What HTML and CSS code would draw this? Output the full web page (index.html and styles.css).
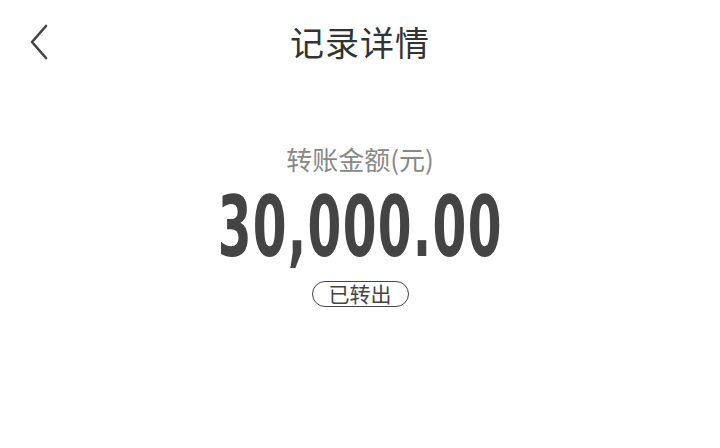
FILE: index.html
```html
<!DOCTYPE html>
<html lang="zh-CN">
<head>
    <meta charset="UTF-8">
    <meta name="viewport" content="width=device-width, initial-scale=1.0">
    <title>记录详情</title>
    <link rel="stylesheet" href="styles.css">
</head>
<body>
    <div class="page">
        <header class="nav-bar">
            <button type="button" class="back-btn" aria-label="返回">
                <svg width="22" height="36" viewBox="0 0 22 36">
                    <path d="M18 2 L4 18 L18 34" fill="none" stroke="#444" stroke-width="2.6" stroke-linecap="round" stroke-linejoin="round"/>
                </svg>
            </button>
            <h1 class="nav-title">记录详情</h1>
        </header>

        <section class="amount-box">
            <div class="amount-label">转账金额(元)</div>
            <div class="amount-value">30,000.00</div>
            <span class="status-tag">已转出</span>
        </section>
    </div>
</body>
</html>
```

FILE: styles.css
```css
* {
    box-sizing: border-box;
    margin: 0;
    padding: 0;
}

body {
    background-color: #fff;
    font-family: "Noto Sans CJK SC", "Noto Sans", sans-serif;
    color: #333;
}

.page {
    width: 720px;
    height: 448px;
}

.nav-bar {
    position: relative;
    height: 84px;
    display: flex;
    align-items: center;
    justify-content: center;
}

.back-btn {
    position: absolute;
    left: 28px;
    top: 24px;
    background: none;
    border: none;
    width: 22px;
    height: 36px;
}

.nav-title {
    font-size: 34px;
    font-weight: 400;
    color: #333;
    letter-spacing: 1px;
    margin-top: -2px;
}

.amount-box {
    display: flex;
    flex-direction: column;
    align-items: center;
    padding-top: 59px;
}

.amount-label {
    font-size: 26px;
    color: #888;
    line-height: 32px;
}

.amount-value {
    margin-top: 11px;
    font-family: "DejaVu Sans Condensed", "DejaVu Sans", sans-serif;
    font-weight: 700;
    font-size: 83px;
    line-height: 84px;
    color: #444;
    transform: scaleX(0.65);
    letter-spacing: 2px;
}

.status-tag {
    margin-top: 11px;
    padding: 0 16px;
    height: 26px;
    line-height: 22px;
    border: 1.6px solid #444;
    border-radius: 13px;
    font-size: 21px;
    color: #444;
}
```
